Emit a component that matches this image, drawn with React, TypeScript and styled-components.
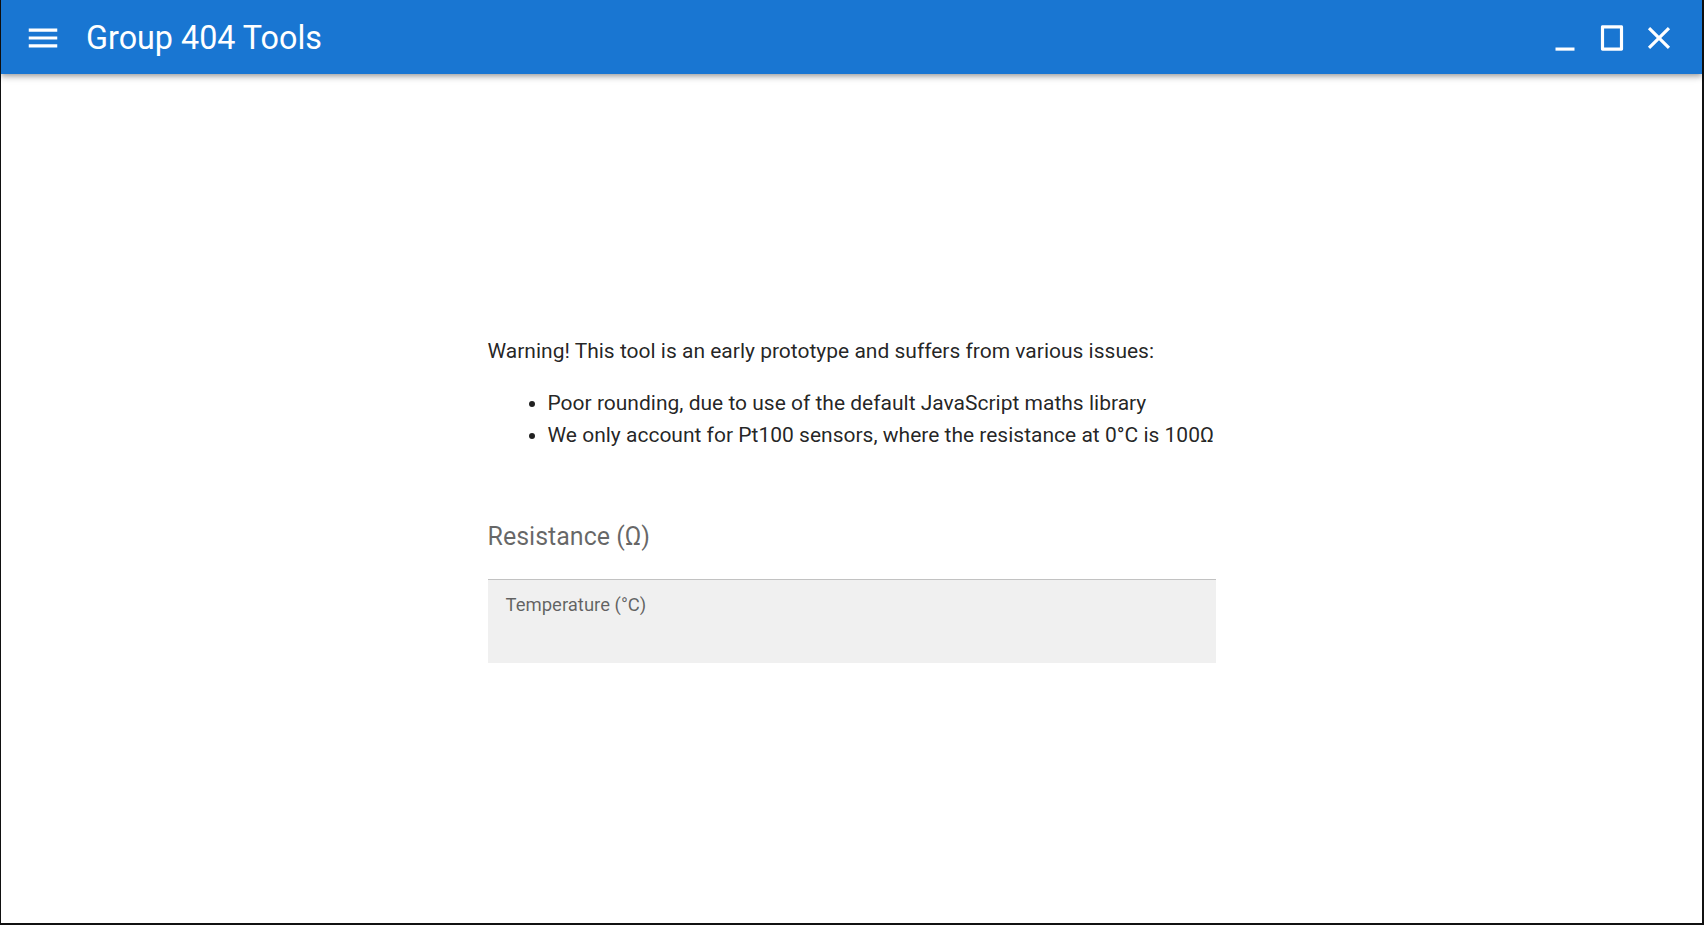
import React from "react";
import styled, { createGlobalStyle } from "styled-components";

const GlobalStyle = createGlobalStyle`
  html, body {
    margin: 0;
    padding: 0;
    background: #ffffff;
  }
  body {
    font-family: Roboto, "Liberation Sans", Arial, sans-serif;
    color: rgba(0, 0, 0, 0.87);
  }
  * { box-sizing: border-box; }
`;

const Frame = styled.div`
  height: 925px;
  display: flex;
  flex-direction: column;
  border-left: 1px solid #111;
  border-right: 2px solid #111;
  border-bottom: 2px solid #111;
  background: #fff;
`;

const AppBar = styled.header`
  position: relative;
  z-index: 1;
  height: 74px;
  flex: none;
  display: flex;
  align-items: center;
  padding: 2px 24px 0 23px;
  background: #1976d2;
  color: #fff;
  box-shadow: 0 2px 4px -1px rgba(0, 0, 0, 0.2), 0 4px 5px 0 rgba(0, 0, 0, 0.14),
    0 1px 10px 0 rgba(0, 0, 0, 0.12);
`;

const IconSlot = styled.span`
  width: 38px;
  height: 38px;
  display: inline-flex;
  flex: none;
  color: #fff;
  svg {
    width: 38px;
    height: 38px;
    fill: currentColor;
    display: block;
  }
`;

const Title = styled.h1`
  flex: 1;
  margin: 0 0 0 24px;
  font-family: Roboto, "Liberation Sans", Arial, sans-serif;
  font-size: 32.3px;
  font-weight: 400;
  line-height: 1.2;
  letter-spacing: 0;
  color: #fff;
`;

const WindowControls = styled.div`
  display: flex;
  align-items: center;
  gap: 9px;
`;

const Main = styled.main`
  flex: 1;
  display: flex;
  align-items: center;
  justify-content: center;
  padding-top: 2px;
`;

const Column = styled.div`
  width: 728px;
  display: flex;
  flex-direction: column;
`;

const Warning = styled.p`
  margin: 0;
  font-size: 21px;
  line-height: 31.5px;
  color: rgba(0, 0, 0, 0.87);
`;

const IssueList = styled.ul`
  margin: 21px 0 0;
  padding-left: 60px;
  font-size: 21px;
  line-height: 31.5px;
  color: rgba(0, 0, 0, 0.87);
`;

const StandardField = styled.div`
  margin-top: 71px;
  display: flex;
  flex-direction: column;
`;

const FieldLabel = styled.label`
  font-size: 25px;
  line-height: 30px;
  color: rgba(0, 0, 0, 0.6);
  padding-bottom: 27px;
`;

const Underline = styled.div`
  height: 1px;
  background: #c2c2c2;
`;

const FilledField = styled.div`
  height: 83px;
  background: #f0f0f0;
  padding: 14px 18px 0;
`;

const FilledLabel = styled.label`
  display: block;
  font-size: 18.5px;
  line-height: 22px;
  color: rgba(0, 0, 0, 0.6);
`;

const MenuIcon = () => (
  <svg viewBox="0 0 24 24" aria-hidden="true">
    <path d="M3 18h18v-2H3v2zm0-5h18v-2H3v2zm0-7v2h18V6H3z" />
  </svg>
);

const MinimizeIcon = () => (
  <svg viewBox="0 0 24 24" aria-hidden="true">
    <path d="M6 18h12v2H6z" />
  </svg>
);

const SquareIcon = () => (
  <svg viewBox="0 0 24 24" aria-hidden="true">
    <path d="M18 4H6c-.6 0-1 .4-1 1v14c0 .6.4 1 1 1h12c.6 0 1-.4 1-1V5c0-.6-.4-1-1-1zm-1 14H7V6h10v12z" />
  </svg>
);

const CloseIcon = () => (
  <svg viewBox="0 0 24 24" aria-hidden="true">
    <path d="M19 6.41L17.59 5 12 10.59 6.41 5 5 6.41 10.59 12 5 17.59 6.41 19 12 13.41 17.59 19 19 17.59 13.41 12z" />
  </svg>
);

export default function App() {
  return (
    <>
      <GlobalStyle />
      <Frame>
        <AppBar>
          <IconSlot>
            <MenuIcon />
          </IconSlot>
          <Title>Group 404 Tools</Title>
          <WindowControls>
            <IconSlot>
              <MinimizeIcon />
            </IconSlot>
            <IconSlot>
              <SquareIcon />
            </IconSlot>
            <IconSlot>
              <CloseIcon />
            </IconSlot>
          </WindowControls>
        </AppBar>
        <Main>
          <Column>
            <Warning>
              Warning! This tool is an early prototype and suffers from various issues:
            </Warning>
            <IssueList>
              <li>Poor rounding, due to use of the default JavaScript maths library</li>
              <li>We only account for Pt100 sensors, where the resistance at 0°C is 100Ω</li>
            </IssueList>
            <StandardField>
              <FieldLabel>Resistance (Ω)</FieldLabel>
              <Underline />
            </StandardField>
            <FilledField>
              <FilledLabel>Temperature (°C)</FilledLabel>
            </FilledField>
          </Column>
        </Main>
      </Frame>
    </>
  );
}
